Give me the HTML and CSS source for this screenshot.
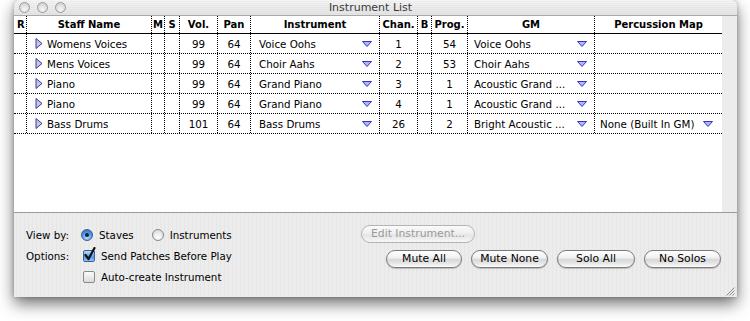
FILE: index.html
```html
<!DOCTYPE html>
<html>
<head>
<meta charset="utf-8">
<title>Instrument List</title>
<link rel="stylesheet" href="styles.css">
</head>
<body>
<div class="window">
  <div class="titlebar">
    <div class="lights"><span class="light"></span><span class="light"></span><span class="light"></span></div>
    <div class="title">Instrument List</div>
  </div>
  <div class="main">
    <div class="table">
      <div class="row head">
        <div class="c">R</div>
        <div class="c">Staff Name</div>
        <div class="c">M</div>
        <div class="c">S</div>
        <div class="c">Vol.</div>
        <div class="c">Pan</div>
        <div class="c">Instrument</div>
        <div class="c">Chan.</div>
        <div class="c">B</div>
        <div class="c">Prog.</div>
        <div class="c">GM</div>
        <div class="c">Percussion Map</div>
      </div>

      <div class="row">
        <div class="c"></div>
        <div class="c name"><svg class="disc" width="8" height="11" viewBox="0 0 8 11"><polygon points="1,0.5 7,5.5 1,10.5" /></svg>Womens Voices</div>
        <div class="c"></div><div class="c"></div>
        <div class="c num">99</div><div class="c num">64</div>
        <div class="c pop"><span class="txt">Voice Oohs</span><svg class="arr" width="10" height="6" viewBox="0 0 10 6"><polygon points="0.5,0.5 9.5,0.5 5,5.5" /></svg></div>
        <div class="c num">1</div><div class="c"></div><div class="c num">54</div>
        <div class="c pop gm"><span class="txt">Voice Oohs</span><svg class="arr" width="10" height="6" viewBox="0 0 10 6"><polygon points="0.5,0.5 9.5,0.5 5,5.5" /></svg></div>
        <div class="c"></div>
      </div>

      <div class="row">
        <div class="c"></div>
        <div class="c name"><svg class="disc" width="8" height="11" viewBox="0 0 8 11"><polygon points="1,0.5 7,5.5 1,10.5" /></svg>Mens Voices</div>
        <div class="c"></div><div class="c"></div>
        <div class="c num">99</div><div class="c num">64</div>
        <div class="c pop"><span class="txt">Choir Aahs</span><svg class="arr" width="10" height="6" viewBox="0 0 10 6"><polygon points="0.5,0.5 9.5,0.5 5,5.5" /></svg></div>
        <div class="c num">2</div><div class="c"></div><div class="c num">53</div>
        <div class="c pop gm"><span class="txt">Choir Aahs</span><svg class="arr" width="10" height="6" viewBox="0 0 10 6"><polygon points="0.5,0.5 9.5,0.5 5,5.5" /></svg></div>
        <div class="c"></div>
      </div>

      <div class="row">
        <div class="c"></div>
        <div class="c name"><svg class="disc" width="8" height="11" viewBox="0 0 8 11"><polygon points="1,0.5 7,5.5 1,10.5" /></svg>Piano</div>
        <div class="c"></div><div class="c"></div>
        <div class="c num">99</div><div class="c num">64</div>
        <div class="c pop"><span class="txt">Grand Piano</span><svg class="arr" width="10" height="6" viewBox="0 0 10 6"><polygon points="0.5,0.5 9.5,0.5 5,5.5" /></svg></div>
        <div class="c num">3</div><div class="c"></div><div class="c num">1</div>
        <div class="c pop gm"><span class="txt">Acoustic Grand ...</span><svg class="arr" width="10" height="6" viewBox="0 0 10 6"><polygon points="0.5,0.5 9.5,0.5 5,5.5" /></svg></div>
        <div class="c"></div>
      </div>

      <div class="row">
        <div class="c"></div>
        <div class="c name"><svg class="disc" width="8" height="11" viewBox="0 0 8 11"><polygon points="1,0.5 7,5.5 1,10.5" /></svg>Piano</div>
        <div class="c"></div><div class="c"></div>
        <div class="c num">99</div><div class="c num">64</div>
        <div class="c pop"><span class="txt">Grand Piano</span><svg class="arr" width="10" height="6" viewBox="0 0 10 6"><polygon points="0.5,0.5 9.5,0.5 5,5.5" /></svg></div>
        <div class="c num">4</div><div class="c"></div><div class="c num">1</div>
        <div class="c pop gm"><span class="txt">Acoustic Grand ...</span><svg class="arr" width="10" height="6" viewBox="0 0 10 6"><polygon points="0.5,0.5 9.5,0.5 5,5.5" /></svg></div>
        <div class="c"></div>
      </div>

      <div class="row">
        <div class="c"></div>
        <div class="c name"><svg class="disc" width="8" height="11" viewBox="0 0 8 11"><polygon points="1,0.5 7,5.5 1,10.5" /></svg>Bass Drums</div>
        <div class="c"></div><div class="c"></div>
        <div class="c num">101</div><div class="c num">64</div>
        <div class="c pop"><span class="txt">Bass Drums</span><svg class="arr" width="10" height="6" viewBox="0 0 10 6"><polygon points="0.5,0.5 9.5,0.5 5,5.5" /></svg></div>
        <div class="c num">26</div><div class="c"></div><div class="c num">2</div>
        <div class="c pop gm"><span class="txt">Bright Acoustic ...</span><svg class="arr" width="10" height="6" viewBox="0 0 10 6"><polygon points="0.5,0.5 9.5,0.5 5,5.5" /></svg></div>
        <div class="c pop perc"><span class="txt">None (Built In GM)</span><svg class="arr" width="10" height="6" viewBox="0 0 10 6"><polygon points="0.5,0.5 9.5,0.5 5,5.5" /></svg></div>
      </div>
    </div>
    <div class="edge"></div>
  </div>

  <div class="panel">
    <div class="opts">
      <div class="lbl">View by:</div>
      <div class="choices">
        <span class="radio on"><span class="rb"></span>Staves</span>
        <span class="radio"><span class="rb"></span>Instruments</span>
      </div>
      <div class="lbl">Options:</div>
      <span class="check on"><span class="cb"><svg class="tick" width="13" height="14" viewBox="0 0 13 14"><path d="M2.5 8 L5.5 12 L11.5 1" /></svg></span>Send Patches Before Play</span>
      <div></div>
      <span class="check"><span class="cb"></span>Auto-create Instrument</span>
    </div>
    <div class="actions">
      <button class="btn dis">Edit Instrument...</button>
      <div class="btnrow">
        <button class="btn w76">Mute All</button>
        <button class="btn w77">Mute None</button>
        <button class="btn w78">Solo All</button>
        <button class="btn w77">No Solos</button>
      </div>
    </div>
    <svg class="grip" width="10" height="10" viewBox="0 0 10 10"><path d="M9.5 1.5 L1.5 9.5 M9.5 4.5 L4.5 9.5 M9.5 7.5 L7.5 9.5" /></svg>
  </div>
</div>
</body>
</html>
```

FILE: styles.css
```css
html, body {
  margin: 0;
  padding: 0;
  background: #ffffff;
}
body {
  width: 750px;
  height: 321px;
  overflow: hidden;
  font-family: "DejaVu Sans", "Liberation Sans", sans-serif;
  font-size: 10.3px;
  color: #000;
}
.window {
  margin-left: 14px;
  width: 723px;
  height: 297px;
  background: #ececec;
  border-radius: 6px 6px 0 0;
  box-shadow: 0 7px 16px rgba(0, 0, 0, 0.55), 0 0 4px rgba(0,0,0,0.25);
  display: flex;
  flex-direction: column;
  position: relative;
}
.titlebar {
  height: 16px;
  flex: none;
  border-radius: 6px 6px 0 0;
  background: repeating-linear-gradient(0deg, rgba(255,255,255,0.3) 0 1px, rgba(0,0,0,0) 1px 2px), linear-gradient(#efefef, #dcdcdc);
  border-bottom: 1px solid #a8a8a8;
  box-sizing: border-box;
  display: flex;
  align-items: center;
  position: relative;
}
.lights {
  display: flex;
  gap: 7px;
  padding-left: 5px;
}
.light {
  width: 11px;
  height: 11px;
  border-radius: 50%;
  border: 1px solid #9a9a9a;
  box-sizing: border-box;
  background: radial-gradient(circle at 50% 70%, #f8f8f8, #d6d6d6 70%);
}
.title {
  flex: 1;
  text-align: center;
  font-size: 11px;
  color: #3a3a3a;
  margin-right: 62px;
}
.main {
  display: flex;
  height: 196px;
  flex: none;
}
.table {
  width: 708px;
  background: #fff;
}
.edge {
  flex: 1;
  background: #ececec;
}
.row {
  display: grid;
  grid-template-columns: 13px 125px 13px 15px 38px 33px 129px 38px 14px 36px 127px 127px;
  height: 20px;
  border-bottom: 1px dotted #000;
  box-sizing: border-box;
}
.row.head {
  height: 18px;
  border-bottom: 1px solid #000;
  font-weight: bold;
  font-size: 10px;
}
.c {
  border-right: 1px dotted #000;
  box-sizing: border-box;
  display: flex;
  align-items: center;
  white-space: nowrap;
  overflow: hidden;
}
.c:last-child {
  border-right: none;
}
.head .c {
  justify-content: center;
}
.head .c:first-child {
  justify-content: flex-start;
  padding-left: 3px;
}
.num {
  justify-content: center;
}
.name {
  padding-left: 8px;
}
.disc {
  margin-right: 4px;
}
.disc polygon {
  fill: #c4c4ee;
  stroke: #3c3c88;
  stroke-width: 1;
}
.pop {
  padding-left: 8px;
  padding-right: 7px;
}
.pop .txt {
  flex: 1;
}
.gm {
  padding-left: 6px;
}
.perc {
  padding-left: 5px;
  padding-right: 9px;
}
.arr polygon {
  fill: #b2b4fa;
  stroke: #3434c4;
  stroke-width: 1;
}
.panel {
  flex: 1;
  border-top: 1px solid #9c9c9c;
  background: repeating-linear-gradient(90deg, #ececec 0 2px, #e6e6e6 2px 3px, #ececec 3px 4px);
  display: flex;
  position: relative;
}
.opts {
  display: grid;
  grid-template-columns: 55px auto;
  grid-auto-rows: 21px;
  padding: 11px 0 0 12px;
  width: 335px;
  box-sizing: border-box;
  align-items: center;
}
.lbl {
  color: #000;
}
.choices {
  display: flex;
  gap: 18px;
}
.radio, .check {
  display: flex;
  align-items: center;
}
.rb {
  width: 12px;
  height: 12px;
  border-radius: 50%;
  border: 1px solid #8a8a8a;
  background: radial-gradient(circle at 50% 70%, #ffffff, #dcdcdc 80%);
  margin-right: 6px;
  box-sizing: border-box;
  display: flex;
  align-items: center;
  justify-content: center;
}
.radio.on .rb {
  border-color: #3a5f99;
  background: radial-gradient(circle at 50% 75%, #b9e0ff, #4d93e6 55%, #2a63b8 100%);
}
.radio.on .rb::after {
  content: "";
  width: 4px;
  height: 4px;
  border-radius: 50%;
  background: #1b1b2e;
}
.cb {
  width: 12px;
  height: 12px;
  border-radius: 2px;
  border: 1px solid #8a8a8a;
  background: linear-gradient(#fbfbfb, #dadada);
  margin: 0 6px 0 2px;
  box-sizing: border-box;
  position: relative;
}
.check.on .cb {
  border-color: #3a5f99;
  background: linear-gradient(#b9dcff, #5a9ae8 60%, #8ec4ff);
}
.tick {
  position: absolute;
  left: -1px;
  top: -4px;
}
.tick path {
  fill: none;
  stroke: #111;
  stroke-width: 2.2;
  stroke-linecap: round;
  stroke-linejoin: round;
}
.actions {
  flex: 1;
  display: flex;
  flex-direction: column;
  padding: 12px 16px 0 12px;
}
.btn {
  font-family: "DejaVu Sans", "Liberation Sans", sans-serif;
  font-size: 10.8px;
  color: #000;
  height: 18px;
  padding: 0;
  border: 1px solid #7a7a7a;
  border-radius: 9px;
  background: linear-gradient(#ffffff 0%, #f2f2f2 40%, #d8d8d8 55%, #e8e8e8 80%, #ffffff 100%);
  box-shadow: 0 1px 1px rgba(0,0,0,0.2);
  line-height: 16px;
}
.btn.dis {
  width: 114px;
  color: #9a9a9a;
  border-color: #b4b4b4;
  box-shadow: none;
  background: linear-gradient(#fbfbfb, #eeeeee 50%, #e4e4e4 55%, #f6f6f6);
}
.btnrow {
  display: flex;
  justify-content: flex-end;
  gap: 9px;
  margin-top: 7px;
}
.w76 { width: 76px; }
.w77 { width: 77px; }
.w78 { width: 78px; }
.grip {
  position: absolute;
  right: 2px;
  bottom: 1px;
}
.grip path {
  stroke: #8c8c8c;
  stroke-width: 1;
}
```
